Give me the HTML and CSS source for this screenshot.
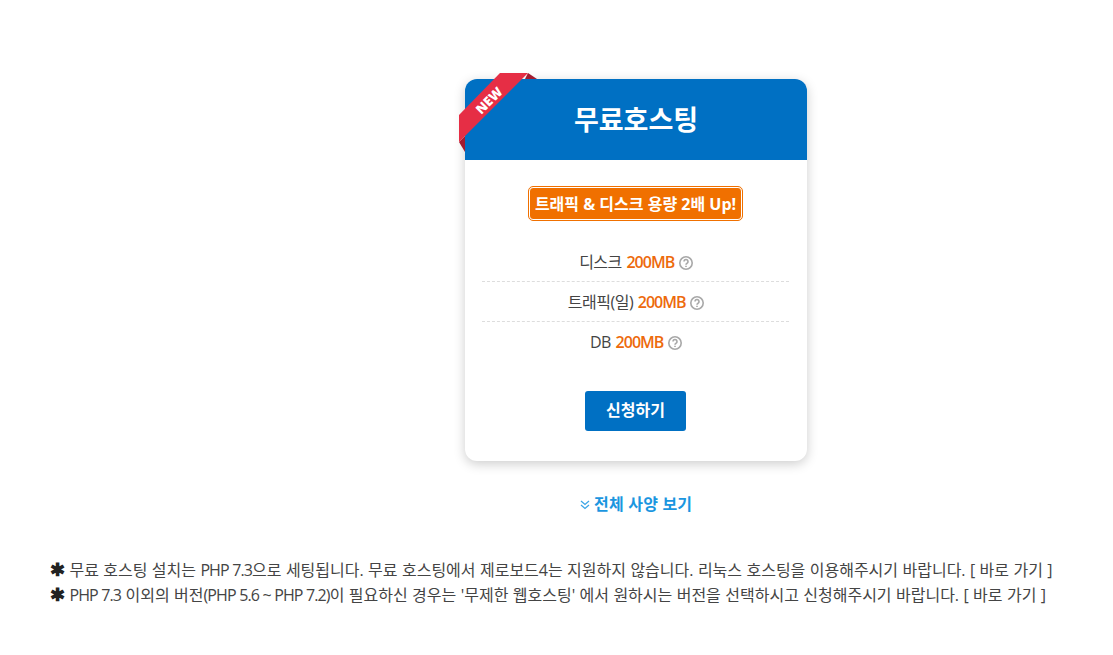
FILE: index.html
```html
<!DOCTYPE html>
<html lang="ko">
<head>
<meta charset="UTF-8">
<meta name="viewport" content="width=device-width, initial-scale=1.0">
<title>무료호스팅</title>
<link rel="stylesheet" href="styles.css">
</head>
<body>
<div class="plan-area">
    <div class="plan-card">
        <svg class="ribbon" width="80" height="82" viewBox="0 0 80 82">
            <polygon class="ribbon-fold" points="69,0 78,6 66,6"/>
            <polygon class="ribbon-fold" points="0,69 6,79 6,63"/>
            <polygon class="ribbon-band" points="41,0 69,0 0,69 0,42"/>
            <text class="ribbon-text" x="30.5" y="32" transform="rotate(-45 30.5 28)" text-anchor="middle">NEW</text>
        </svg>
        <div class="plan-head">
            <h2>무료호스팅</h2>
        </div>
        <div class="plan-body">
            <div class="plan-badge">트래픽 &amp; 디스크 용량 2배 Up!</div>
            <ul class="spec-list">
                <li>디스크 <strong>200MB</strong> <svg class="help" width="14" height="14" viewBox="0 0 14 14"><circle cx="7" cy="7" r="6.2"/><path d="M5 5.5a2 2 0 1 1 3.1 1.7c-.7.4-1.1.8-1.1 1.5"/><path d="M7 9.8v1.2"/></svg></li>
                <li>트래픽(일) <strong>200MB</strong> <svg class="help" width="14" height="14" viewBox="0 0 14 14"><circle cx="7" cy="7" r="6.2"/><path d="M5 5.5a2 2 0 1 1 3.1 1.7c-.7.4-1.1.8-1.1 1.5"/><path d="M7 9.8v1.2"/></svg></li>
                <li>DB <strong>200MB</strong> <svg class="help" width="14" height="14" viewBox="0 0 14 14"><circle cx="7" cy="7" r="6.2"/><path d="M5 5.5a2 2 0 1 1 3.1 1.7c-.7.4-1.1.8-1.1 1.5"/><path d="M7 9.8v1.2"/></svg></li>
            </ul>
            <a class="apply-btn" href="#">신청하기</a>
        </div>
    </div>
    <a class="more-link" href="#"><svg width="10" height="10" viewBox="0 0 10 10"><path d="M1 1l4 3.5L9 1M1 5l4 3.5L9 5"/></svg> 전체 사양 보기</a>
</div>
<div class="notes">
    <p><span class="star">✱</span> 무료 호스팅 설치는 <span class="latin">PHP 7.3</span>으로 세팅됩니다. 무료 호스팅에서 제로보드4는 지원하지 않습니다. 리눅스 호스팅을 이용해주시기 바랍니다. [ 바로 가기 ]</p>
    <p><span class="star">✱</span> <span class="latin">PHP 7.3</span> 이외의 버전<span class="latin">(PHP 5.6 ~ PHP 7.2)</span>이 필요하신 경우는 '무제한 웹호스팅' 에서 원하시는 버전을 선택하시고 신청해주시기 바랍니다. [ 바로 가기 ]</p>
</div>
</body>
</html>
```

FILE: styles.css
```css
body {
    margin: 0;
    background: #fff;
    color: #444;
    font-family: 'Open Sans', 'Noto Sans CJK KR', sans-serif;
    font-size: 16px;
    letter-spacing: -0.5px;
}
.plan-area {
    display: flex;
    flex-direction: column;
    align-items: center;
    padding: 79px 0 0 159px;
}
.plan-card {
    position: relative;
    width: 342px;
    height: 382px;
    border-radius: 12px;
    background: #fff;
    box-shadow: 0 3px 12px rgba(0, 0, 0, 0.2);
}
.ribbon {
    position: absolute;
    top: -6px;
    left: -6px;
}
.ribbon-band {
    fill: #e62e45;
}
.ribbon-fold {
    fill: #a31b30;
}
.ribbon-text {
    fill: #fff;
    font-size: 13px;
    font-weight: 800;
    letter-spacing: 0;
}
.plan-head {
    height: 81px;
    padding-bottom: 2px;
    box-sizing: border-box;
    border-radius: 12px 12px 0 0;
    background: #0070c3;
    display: flex;
    justify-content: center;
    align-items: center;
}
.plan-head h2 {
    margin: 0;
    color: #fff;
    font-size: 27px;
    font-weight: 700;
    letter-spacing: 0;
}
.plan-body {
    display: flex;
    flex-direction: column;
    align-items: center;
    padding: 27px 18px 0 17px;
}
.plan-badge {
    height: 31px;
    line-height: 32px;
    padding: 0 5px;
    border: 1px solid #fff;
    outline: 1px solid #f07000;
    border-radius: 4px;
    background: #f07000;
    color: #fff;
    font-size: 16px;
    font-weight: 700;
    letter-spacing: 0;
    white-space: nowrap;
}
.spec-list {
    list-style: none;
    align-self: stretch;
    margin: 22px 0 0;
    padding: 0;
}
.spec-list li {
    height: 40px;
    line-height: 40px;
    box-sizing: border-box;
    padding-left: 1px;
    border-bottom: 1px dashed #ddd;
    text-align: center;
    word-spacing: 1px;
}
.spec-list li:last-child {
    border-bottom: 0;
}
.spec-list strong {
    color: #ed6a0c;
    font-weight: 600;
    letter-spacing: -1px;
}
.help {
    vertical-align: -2px;
    fill: none;
    stroke: #a8a8a8;
    stroke-width: 1.6;
}
.apply-btn {
    margin-top: 29px;
    width: 101px;
    height: 40px;
    line-height: 39px;
    border-radius: 3px;
    background: #0070c3;
    color: #fff;
    font-size: 16px;
    font-weight: 700;
    text-align: center;
    text-decoration: none;
    letter-spacing: 0;
}
.more-link {
    margin-top: 30px;
    color: #1a96e0;
    font-size: 16px;
    font-weight: 700;
    text-decoration: none;
    letter-spacing: 0.2px;
}
.more-link svg {
    fill: none;
    stroke: #3ba5e6;
    stroke-width: 1.3;
}
.notes {
    margin-top: 43px;
    padding-left: 50px;
}
.notes p {
    margin: 0;
    line-height: 25px;
    letter-spacing: 0;
    word-spacing: 0.25px;
    white-space: nowrap;
}
.latin {
    letter-spacing: -0.9px;
}
.star {
    color: #222;
    font-size: 18px;
    font-weight: 700;
    line-height: 1;
}
```
